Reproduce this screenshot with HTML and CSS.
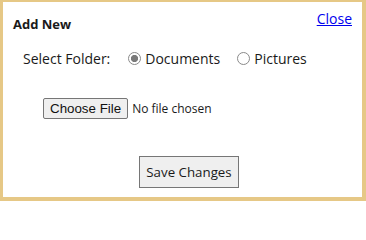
FILE: index.html
```html
<!DOCTYPE html>
<html>
<head>
<meta charset="utf-8">
<link rel="stylesheet" href="styles.css">
</head>
<body>
<div class="dialog">
  <div class="header">
    <span class="title">Add New</span>
    <a class="close" href="#">Close</a>
  </div>
  <div class="folder-row">
    <span class="label">Select Folder:</span>
    <label class="opt"><input type="radio" name="folder" checked> Documents</label>
    <label class="opt"><input type="radio" name="folder"> Pictures</label>
  </div>
  <div class="file-row">
    <input type="file">
  </div>
  <div class="actions">
    <button class="save">Save Changes</button>
  </div>
</div>
</body>
</html>
```
FILE: styles.css
```css
html, body {
  margin: 0;
  padding: 0;
}
body {
  font-family: "Open Sans", "Noto Sans", sans-serif;
  font-size: 14px;
  color: #1a1a1a;
  background: #fff;
}
.dialog {
  box-sizing: border-box;
  width: 366px;
  height: 201px;
  border-style: solid;
  border-color: #e6c886;
  border-width: 2px 4px 4px 3px;
  display: flex;
  flex-direction: column;
}
.header {
  display: flex;
  justify-content: space-between;
  align-items: flex-start;
  padding: 7px 10px 0 10px;
}
.title {
  font-weight: bold;
  font-size: 13px;
  margin-top: 6px;
}
.close {
  color: #0000ee;
  font-size: 14px;
  text-decoration: underline;
}
.folder-row {
  display: flex;
  align-items: center;
  padding: 16px 0 0 20px;
}
.label {
  margin-right: 18px;
}
.opt {
  display: flex;
  align-items: center;
  margin-right: 17px;
}
.opt input {
  appearance: none;
  -webkit-appearance: none;
  box-sizing: border-box;
  margin: 0 4px 0 0;
  width: 13px;
  height: 13px;
  border: 1px solid #8a8a8a;
  border-radius: 50%;
  background: #fff;
}
.opt input:checked {
  background: radial-gradient(circle, #7a7a7a 0 3.3px, #fff 3.9px);
}
.file-row {
  padding: 30px 0 0 40px;
}
.file-row input {
  font-family: "Open Sans", sans-serif;
  font-size: 12px;
  color: #1a1a1a;
}
.file-row input::file-selector-button {
  font-family: "Liberation Sans", Arial, sans-serif;
  font-size: 13.33px;
  color: #111;
  background: #efefef;
  border: 1px solid #767676;
  border-radius: 2px;
  padding: 1px 6px;
  height: 21px;
  margin-right: 4px;
}
.actions {
  display: flex;
  justify-content: center;
  padding: 37px 0 0 13px;
}
.save {
  font-family: "Open Sans", sans-serif;
  font-size: 13.3px;
  color: #1a1a1a;
  background: #efefef;
  border: 1px solid #767676;
  border-radius: 0;
  padding: 0;
  width: 100px;
  height: 32px;
  white-space: nowrap;
}
```
